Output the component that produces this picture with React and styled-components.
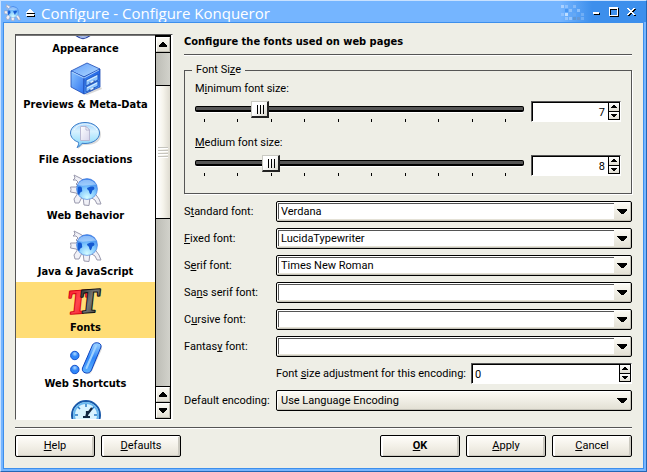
import React, { useEffect, useId, useRef, useState } from "react";
import styled, { createGlobalStyle, css } from "styled-components";

const face = "#eeeee6";
const dark = "#555555";

const GlobalStyle = createGlobalStyle`
  *, *::before, *::after { box-sizing: border-box; }
  body {
    margin: 0;
    background: ${face};
    color: #000;
    font: 11px/14px Roboto, "Liberation Sans", sans-serif;
  }
  button, input, select { font: inherit; color: inherit; margin: 0; }
  u { text-underline-offset: 1px; text-decoration-thickness: 1px; text-decoration-skip-ink: none; }
`;

const Window = styled.div`
  display: flex;
  flex-direction: column;
  min-height: 100vh;
  border: 1px solid #2566b4;
  border-top-color: #c8e1ff;
  border-left-color: #c8e1ff;
  background: #75b5ff;
  padding: 0 2px 2px;
`;

const TitleBar = styled.header`
  display: flex;
  align-items: center;
  gap: 5px;
  height: 21px;
  padding: 2px 8px 0 1px;
  margin-right: -2px;
  background: linear-gradient(to right, #75b5ff calc(100% - 86px), #3d8fec calc(100% - 54px));
`;

const Title = styled.h1`
  flex: 1;
  margin: 0;
  color: #fff;
  font: 500 15px/20px "Open Sans", "Noto Sans", sans-serif;
  white-space: nowrap;
`;

const TitleButton = styled.button`
  display: flex;
  padding: 0;
  border: 0;
  background: none;
`;

const WindowButtons = styled.div`
  display: flex;
  align-items: center;
  gap: 6px;
`;

const Body = styled.main`
  flex: 1;
  display: flex;
  flex-direction: column;
  border: 1px solid #3d8fec;
  background: ${face};
  padding: 11px 11px 11px;
`;

const Columns = styled.div`
  flex: 1;
  display: flex;
  gap: 11px;
`;

const ListBox = styled.div`
  display: flex;
  flex: none;
  width: 158px;
  height: 386px;
  padding-right: 1px;
  border: 1px solid #fff;
  border-top-color: ${dark};
  border-left-color: ${dark};
  background: #fff;
`;

const Items = styled.nav`
  flex: 1;
  overflow: hidden;
  display: flex;
  flex-direction: column;
  align-items: stretch;
  border-top: 1px solid #777;
`;

const Item = styled.button`
  flex: none;
  display: flex;
  flex-direction: column;
  align-items: center;
  height: 56px;
  gap: 3px;
  padding: 4px 0 3px;
  border: 0;
  background: ${(p) => (p.$selected ? "#ffdd76" : "#fff")};
  font: bold 11px/14px "DejaVu Sans Condensed", "DejaVu Sans", sans-serif;
  white-space: nowrap;
  svg { flex: none; overflow: visible; }
`;

const ScrollBar = styled.div`
  flex: none;
  display: flex;
  flex-direction: column;
  width: 16px;
  border: 1px solid #000;
  border-top-width: 2px;
`;

const Groove = styled.div`
  flex: ${(p) => p.$grow};
  background: linear-gradient(to right, #bdbdb6, #d2d2cb);
`;

const Thumb = styled.div`
  flex: 133;
  display: flex;
  flex-direction: column;
  align-items: center;
  justify-content: center;
  gap: 2px;
  border: solid #000;
  border-width: 1px 0;
  background: linear-gradient(to right, #fff 10%, #f6f4ec 50%, #dedbd0);
`;

const Grip = styled.span`
  width: 10px;
  height: 1px;
  background: #c6c5be;
  box-shadow: 0 1px #fff;
`;

const ArrowButton = styled.button`
  flex: none;
  display: flex;
  align-items: center;
  justify-content: center;
  height: 15px;
  padding: 0;
  border: 1px solid #fff;
  border-right-color: #bdbbb1;
  border-bottom-color: #bdbbb1;
  background: linear-gradient(#fbfaf4, #e2dfd3);
  outline: 1px solid #000;
  margin-bottom: 1px;
  &:last-child { margin-bottom: 0; }
`;

const Page = styled.section`
  flex: 1;
  min-width: 0;
  display: flex;
  flex-direction: column;
`;

const Heading = styled.h2`
  margin: 0;
  height: 20px;
  padding-top: 1px;
  font: bold 11px/14px "DejaVu Sans Condensed", "DejaVu Sans", sans-serif;
`;

const Rule = styled.hr`
  flex: none;
  width: 100%;
  height: 2px;
  margin: 0;
  border: 0;
  border-top: 1px solid ${dark};
  border-bottom: 1px solid #fff;
`;

const Group = styled.fieldset`
  min-width: 0;
  height: 131px;
  margin: 7px 0 7px;
  padding: 5px 10px 0;
  border: 1px solid ${dark};
  box-shadow: 1px 1px #fff;
  display: flex;
  flex-direction: column;
  gap: 14px;
`;

const Legend = styled.legend`
  margin-left: -3px;
  padding: 0 4px;
`;

const Field = styled.div`
  display: grid;
  grid-template-columns: 1fr 90px;
  column-gap: 7px;
  row-gap: 5px;
`;

const FieldLabel = styled.label`
  grid-column: 1 / -1;
  height: 14px;
`;

const SliderBox = styled.div`
  display: flex;
  flex-direction: column;
  gap: 2px;
`;

const thumbStyle = css`
  appearance: none;
  width: 18px;
  height: 17px;
  margin-top: -6px;
  border: solid;
  border-width: 1px 2px 2px 1px;
  border-color: #c9c9c2 #222 #222 #c9c9c2;
  border-radius: 0;
  background:
    linear-gradient(#000, #000) 5px 3px / 1px 9px no-repeat,
    linear-gradient(#000, #000) 8px 3px / 1px 9px no-repeat,
    linear-gradient(#000, #000) 11px 3px / 1px 9px no-repeat,
    linear-gradient(135deg, #fff 40%, #d8d6cc);
`;

const Slider = styled.input`
  appearance: none;
  display: block;
  width: 100%;
  height: 16px;
  background: none;
  &::-webkit-slider-runnable-track {
    height: 6px;
    border: 1px solid #000;
    border-bottom-width: 2px;
    border-radius: 2px;
    background: ${dark};
    box-shadow: 0 1px #fff;
  }
  &::-webkit-slider-thumb { ${thumbStyle} }
`;

const Ticks = styled.div`
  display: flex;
  justify-content: space-between;
  padding: 0 18px 0 9px;
`;

const Tick = styled.span`
  width: 1px;
  height: 3px;
  background: #000;
`;

const SpinBox = styled.div`
  display: flex;
  height: 21px;
  border: 1px solid #fff;
  border-top-color: ${dark};
  border-left-color: ${dark};
  background: #fff;
  box-shadow: inset 1px 1px #000;
`;

const SpinInput = styled.input`
  flex: 1;
  min-width: 0;
  width: 0;
  padding: 2px 3px 0;
  border: 0;
  outline: 0;
  background: none;
  text-align: ${(p) => p.$align};
`;

const SpinButtons = styled.div`
  flex: none;
  display: flex;
  flex-direction: column;
  width: 12px;
  height: 18px;
  gap: 1px;
  padding: 1px;
  background: #000;
`;

const SpinButton = styled.button`
  flex: 1;
  display: flex;
  align-items: center;
  justify-content: center;
  min-height: 0;
  padding: 0;
  border: 0;
  background: linear-gradient(#fff, #dedbd0);
`;

const Form = styled.div`
  display: grid;
  grid-template-columns: 86px 1fr;
  column-gap: 6px;
  row-gap: 6px;
  align-items: center;
`;

const FormLabel = styled.label`
  white-space: nowrap;
`;

const Adjustment = styled.div`
  grid-column: 2;
  display: grid;
  grid-template-columns: auto 1fr;
  gap: 5px;
  align-items: center;
`;

const ComboFrame = styled.div`
  display: grid;
  height: 21px;
  border: 1px solid #000;
  border-radius: 2px;
  background: linear-gradient(#fdfcf6, #e2dfd3);
  box-shadow: inset 1px 1px #fff, inset -1px -1px #c4c2b8;
  > * { grid-area: 1 / 1; }
  > svg { justify-self: end; align-self: center; margin-right: 4px; pointer-events: none; }
`;

const Select = styled.select`
  appearance: none;
  outline: 0;
  padding: ${(p) => (p.$editable ? "2px 20px 0 3px" : "0 20px 0 4px")};
  margin: ${(p) => (p.$editable ? "1px 17px 2px 1px" : "0")};
  border: 0;
  border-radius: 0;
  background: ${(p) => (p.$editable ? "#fff" : "none")};
  box-shadow: ${(p) => (p.$editable ? `inset 1px 1px ${dark}` : "none")};
`;

const Footer = styled.footer`
  display: flex;
  gap: 6px;
  margin-top: 6px;
`;

const Spacer = styled.span`
  flex: 1;
`;

const PushButton = styled.button`
  width: 80px;
  height: 22px;
  padding: 0;
  border: 1px solid #000;
  border-radius: 2px;
  background: linear-gradient(#fffefa, #f3f0e8 50%, #e4e1d6);
  box-shadow: inset 2px 1px #fff, inset -2px -1px #cbc9c0;
  font-weight: ${(p) => (p.$bold ? "bold" : "normal")};
`;

/* Drawings */

const Triangle = ({ w = 10, h = 5, up }) => (
  <svg width={w} height={h} viewBox="0 0 10 5" preserveAspectRatio="none" shapeRendering="crispEdges">
    <path d={up ? "M4 0H6L10 4V5H0V4Z" : "M0 0H10V1L6 5H4L0 1Z"} />
  </svg>
);

function GlobeGear({ size = 32 }) {
  const id = useId();
  return (
    <svg width={size} height={size} viewBox="0 0 32 32">
      <defs>
        <radialGradient id={id} cx=".5" cy=".9" r=".9">
          <stop offset="0" stopColor="#d4fcff" />
          <stop offset=".5" stopColor="#7cc5fd" />
          <stop offset="1" stopColor="#2a74ea" />
        </radialGradient>
      </defs>
      <g fill="#f1f1f7" stroke="#9a9aae" strokeLinejoin="round">
        <path d="M4 1 10 4 15 7 9 13 6 10 8 8 6 6 3 6 5 4Z" />
        <path d="M0.5 13 6 13 9 11V21L6 19 0.5 18 1 15.500Z" />
        <path d="M8 19 4 25 5 29 9 29 12 23Z" />
        <path d="M13 23 14 31 19 31.500 20 23Z" />
        <path d="M20 23 25 26 27 30 31 30 29 25 24 18Z" />
      </g>
      <circle cx="17" cy="15" r="10.500" fill={`url(#${id})`} stroke="#4a7fdc" strokeWidth=".6" />
      <path d="M8 13c3-1 4 0 4 2s1 2-1 3-1 3-2 3-2-4-1-8ZM17 14c2-1 5-2 7-1 1 2 0 3-1 3s-1 3-2 4-2-2-2-3-2-1-2-3Z" fill="#155ad2" />
      <path d="M8 11c2-7 15-7 18 0-5-1-12 2-18 0Z" fill="#c5e2ff" opacity=".6" />
    </svg>
  );
}

const Cabinet = () => (
  <svg width="32" height="33" viewBox="0 0 32 33">
    <defs>
      <linearGradient id="cabTop" x2="1" y2="1"><stop stopColor="#5f9dfb" /><stop offset="1" stopColor="#b5dcff" /></linearGradient>
      <linearGradient id="cabLeft" x2="1" y2="1"><stop stopColor="#8bc5ff" /><stop offset="1" stopColor="#2d72f0" /></linearGradient>
      <linearGradient id="cabRight" x2="0" y2="1"><stop stopColor="#1f62e3" /><stop offset="1" stopColor="#55a1ff" /></linearGradient>
    </defs>
    <path d="M14 32 31 25 32 27 17 33Z" fill="#000" opacity=".15" />
    <g stroke="#1a49b4" strokeWidth=".8" strokeLinejoin="round">
      <path d="M17 1 30 7 14 15 1 9Z" fill="url(#cabTop)" />
      <path d="M1 9 14 15V32L1 25Z" fill="url(#cabLeft)" />
      <path d="M14 15 30 7V25L14 32Z" fill="url(#cabRight)" />
      <path d="M16 18 28 12V18L16 24ZM16 25 28 19V24L16 30Z" fill="#8dc5ff" stroke="#174bb8" />
    </g>
    <path d="M17 19 27 14M17 26 27 21" stroke="#e3f4ff" />
    <path d="M20 20v2l4-2v-2M20 27v2l4-2v-2" fill="#dff2ff" stroke="#123a93" strokeWidth=".7" />
    <path d="M2 10 14 16 29 8" fill="none" stroke="#c5e5ff" strokeWidth=".8" />
  </svg>
);

const Bubble = () => (
  <svg width="32" height="32" viewBox="0 0 32 32">
    <defs>
      <linearGradient id="bub" x2="0" y2="1"><stop stopColor="#9fd0fb" /><stop offset=".35" stopColor="#d8f2ff" /><stop offset=".7" stopColor="#a9e4fd" /><stop offset="1" stopColor="#6fc4f6" /></linearGradient>
      <linearGradient id="doc" x2="1" y2="1"><stop stopColor="#fff" /><stop offset="1" stopColor="#d5d5ec" /></linearGradient>
    </defs>
    <path d="M16 6c9 0 15 4 15 10.500S25 27 17 27l-4 0-5 4 1-6" fill="#000" opacity=".14" />
    <path d="M15 4.500C23 4.500 29.500 9 29.500 15S23 25.500 15 25.500L12 25.300C11 27 9.500 28.500 7 29.500 8.500 27.500 8.700 26 8.500 24.300 3.500 22.500.5 19 .5 15 .5 9 7 4.500 15 4.500Z" fill="url(#bub)" stroke="#3a7cc9" />
    <path d="M4 12C6 8 10 6 15 6s10 2 12 6" fill="none" stroke="#fff" opacity=".8" />
    <path d="M10.500 8.500H16L19.500 12V22.500H10.500Z" fill="url(#doc)" stroke="#b9b9d3" />
    <path d="M16 8.500V12H19.500Z" fill="#fff" stroke="#a7a7c9" strokeWidth=".8" />
  </svg>
);

const Letters = () => (
  <svg width="32" height="32" viewBox="0 0 32 32" fontFamily="Liberation Serif, serif" fontWeight="bold" fontStyle="italic" fontSize="34">
    <defs>
      <linearGradient id="red" x2="1" y2="1"><stop stopColor="#f80d20" /><stop offset=".5" stopColor="#ff454d" /><stop offset="1" stopColor="#e60012" /></linearGradient>
      <linearGradient id="ink" x2="1" y2="1"><stop stopColor="#111" /><stop offset=".5" stopColor="#777" /><stop offset="1" stopColor="#222" /></linearGradient>
    </defs>
    <g strokeLinejoin="round" strokeWidth="2" paintOrder="stroke">
      <text x="-3" y="27" fill="url(#red)" stroke="#d00616" transform="rotate(-4 10 14)">T</text>
      <text x="9" y="26" fill="url(#ink)" stroke="#111" transform="rotate(-4 22 14)">T</text>
    </g>
  </svg>
);

const Shortcut = () => (
  <svg width="32" height="32" viewBox="0 0 32 32">
    <defs>
      <linearGradient id="slash" x2="0" y2="1"><stop stopColor="#9bd2ff" /><stop offset=".5" stopColor="#2f86f8" /><stop offset="1" stopColor="#5fb3ff" /></linearGradient>
      <radialGradient id="dot" cy=".3"><stop stopColor="#b3dcff" /><stop offset=".7" stopColor="#2f86f8" /></radialGradient>
    </defs>
    <path d="M28 6 18 28" stroke="#000" strokeWidth="8" strokeLinecap="round" opacity=".14" />
    <path d="M22.500 3C24 -.5 32 0 31 5L21.500 28C19.500 33 11 31.500 12.500 26Z" fill="url(#slash)" stroke="#0d43c0" />
    <path d="M26 4 16.500 26" stroke="#9fd2ff" strokeWidth="2" strokeLinecap="round" />
    <circle cx="4.800" cy="13.500" r="4.200" fill="url(#dot)" stroke="#1450cc" />
    <circle cx="4.800" cy="27.500" r="4.200" fill="url(#dot)" stroke="#1450cc" />
  </svg>
);

const Clock = () => (
  <svg width="32" height="32" viewBox="0 0 32 32">
    <circle cx="16" cy="17" r="14" fill="#d9f3ff" stroke="#1958a8" strokeWidth="2" />
    <circle cx="16" cy="17" r="12" fill="none" stroke="#69b7ee" strokeWidth="2" />
    <path d="M16 6v3M27 17h-3M5 17h3M8 9l2 2M24 9l-2 2" stroke="#287ac5" strokeWidth="1.500" />
    <path d="M22 10 16 18M13 19h7M17 13v6" stroke="#122742" strokeWidth="2.200" />
  </svg>
);

const Appearance = () => (
  <svg width="32" height="33" viewBox="0 0 32 33">
    <path d="M13 4 24 26C20 30 17 32 13 32.500 9 32 6 30 2 26Z" fill="#dceaff" stroke="#253f9d" strokeWidth="1.500" />
    <path d="M8 29c4 3 6 3 10 0" fill="none" stroke="#9fb4e6" strokeWidth="2" />
  </svg>
);

const Shade = () => (
  <svg width="10" height="8" viewBox="0 0 10 8" shapeRendering="crispEdges">
    <path d="M5 1H6V2H7V3H8V4H9V5H1V4H5ZM1 6H9V8H1Z" fill="#000" />
    <path d="M3 0H5V1H6V2H7V3H8V4H0V3H1V2H2V1H3ZM0 5H8V7H0Z" fill="#fff" />
  </svg>
);

const mosaic = [
  [0, 0, "#a9d0ff"], [4, 0, "#8fc2ff"], [12, 0, "#84b9f8"],
  [4, 4, "#4796f3"], [8, 4, "#8dc0fb"], [16, 4, "#8dc0fb"],
  [0, 8, "#8fc2ff"], [4, 8, "#c0deff"], [12, 8, "#66a8f3"], [20, 8, "#70aef5"],
  [4, 12, "#94c4fc"], [8, 12, "#94c4fc"], [12, 12, "#5d97d6"], [16, 12, "#6397d6"], [20, 12, "#70aef5"],
];

const Mosaic = () => (
  <svg width="24" height="16" viewBox="0 0 24 16" shapeRendering="crispEdges">
    {mosaic.map(([x, y, c]) => <rect key={`${x}-${y}`} x={x} y={y} width="3" height="3" fill={c} />)}
  </svg>
);

const controls = {
  Minimize: "M3 5H9V7H3Z",
  Maximize: "M1 0H10V9H1ZM2 2V8H9V2Z",
  Close: "M1 1H3V2H4V3H6V2H7V1H9V2H8V3H7V4H6V5H7V6H8V7H9V8H7V7H6V6H4V7H3V8H1V7H2V6H3V5H4V4H3V3H2V2H1Z",
};

const ControlIcon = ({ name }) => (
  <svg width="12" height="11" viewBox="0 0 12 11" shapeRendering="crispEdges" fillRule="evenodd">
    <path d={controls[name]} transform="translate(1 1)" fill="#000" />
    <path d={controls[name]} fill="#fff" />
  </svg>
);

/* Data */

const sections = [
  ["Appearance", Appearance],
  ["Previews & Meta-Data", Cabinet],
  ["File Associations", Bubble],
  ["Web Behavior", GlobeGear],
  ["Java & JavaScript", GlobeGear],
  ["Fonts", Letters],
  ["Web Shortcuts", Shortcut],
  ["", Clock],
];

const fonts = [
  ["S", "t", "andard font:", "Verdana"],
  ["", "F", "ixed font:", "LucidaTypewriter"],
  ["S", "e", "rif font:", "Times New Roman"],
  ["Sa", "n", "s serif font:", ""],
  ["C", "u", "rsive font:", ""],
  ["Fantas", "y", " font:", ""],
];

function Spin({ id, value, onChange, align = "right", label }) {
  return (
    <SpinBox>
      <SpinInput id={id} aria-label={label} value={value} $align={align} onChange={(e) => onChange(Number(e.target.value) || 0)} />
      <SpinButtons>
        <SpinButton aria-label="Increase" onClick={() => onChange(value + 1)}><Triangle w={6} h={3} up /></SpinButton>
        <SpinButton aria-label="Decrease" onClick={() => onChange(value - 1)}><Triangle w={6} h={3} /></SpinButton>
      </SpinButtons>
    </SpinBox>
  );
}

function SizeField({ children, initial, name }) {
  const id = useId();
  const [value, setValue] = useState(initial);
  return (
    <Field>
      <FieldLabel htmlFor={id}>{children}</FieldLabel>
      <SliderBox>
        <Slider id={id} type="range" min="2" max="30" value={value} onChange={(e) => setValue(Number(e.target.value))} />
        <Ticks>{Array.from({ length: 10 }, (_, i) => <Tick key={i} />)}</Ticks>
      </SliderBox>
      <Spin label={name} value={value} onChange={setValue} />
    </Field>
  );
}

function Combo({ id, value, editable }) {
  return (
    <ComboFrame>
      <Select id={id} defaultValue={value} $editable={editable}><option>{value}</option></Select>
      <Triangle />
    </ComboFrame>
  );
}

export default function App() {
  const list = useRef(null);
  const [selected, setSelected] = useState("Fonts");
  const [adjust, setAdjust] = useState(0);
  useEffect(() => { list.current.scrollTop = 34; }, []);

  return (
    <>
      <GlobalStyle />
      <Window>
        <TitleBar>
          <GlobeGear size={17} />
          <TitleButton aria-label="Shade"><Shade /></TitleButton>
          <Title>Configure - Configure Konqueror</Title>
          <Mosaic />
          <WindowButtons>
            {Object.keys(controls).map((name) => (
              <TitleButton key={name} aria-label={name}><ControlIcon name={name} /></TitleButton>
            ))}
          </WindowButtons>
        </TitleBar>
        <Body>
          <Columns>
            <ListBox>
              <Items ref={list}>
                {sections.map(([name, Icon]) => (
                  <Item key={name} $selected={name === selected} onClick={() => setSelected(name)}><Icon />{name}</Item>
                ))}
              </Items>
              <ScrollBar>
                <ArrowButton aria-label="Scroll up"><Triangle w={8} up /></ArrowButton>
                <Groove $grow={32} />
                <Thumb><Grip /><Grip /><Grip /><Grip /></Thumb>
                <Groove $grow={170} />
                <ArrowButton aria-label="Scroll up"><Triangle w={8} up /></ArrowButton>
                <ArrowButton aria-label="Scroll down"><Triangle w={8} /></ArrowButton>
              </ScrollBar>
            </ListBox>
            <Page>
              <Heading>Configure the fonts used on web pages</Heading>
              <Rule />
              <Group>
                <Legend>Font Si<u>z</u>e</Legend>
                <SizeField initial={7} name="Minimum font size">M<u>i</u>nimum font size:</SizeField>
                <SizeField initial={8} name="Medium font size"><u>M</u>edium font size:</SizeField>
              </Group>
              <Form>
                {fonts.map(([before, key, after, value]) => (
                  <React.Fragment key={after}>
                    <FormLabel htmlFor={`font-${key}`}>{before}<u>{key}</u>{after}</FormLabel>
                    <Combo id={`font-${key}`} value={value} editable />
                  </React.Fragment>
                ))}
                <Adjustment>
                  <FormLabel htmlFor="adjust">Font <u>s</u>ize adjustment for this encoding:</FormLabel>
                  <Spin id="adjust" value={adjust} onChange={setAdjust} align="left" />
                </Adjustment>
                <FormLabel htmlFor="encoding">Default encoding:</FormLabel>
                <Combo id="encoding" value="Use Language Encoding" />
              </Form>
            </Page>
          </Columns>
          <Rule />
          <Footer>
            <PushButton><u>H</u>elp</PushButton>
            <PushButton><u>D</u>efaults</PushButton>
            <Spacer />
            <PushButton $bold><u>O</u>K</PushButton>
            <PushButton><u>A</u>pply</PushButton>
            <PushButton><u>C</u>ancel</PushButton>
          </Footer>
        </Body>
      </Window>
    </>
  );
}
